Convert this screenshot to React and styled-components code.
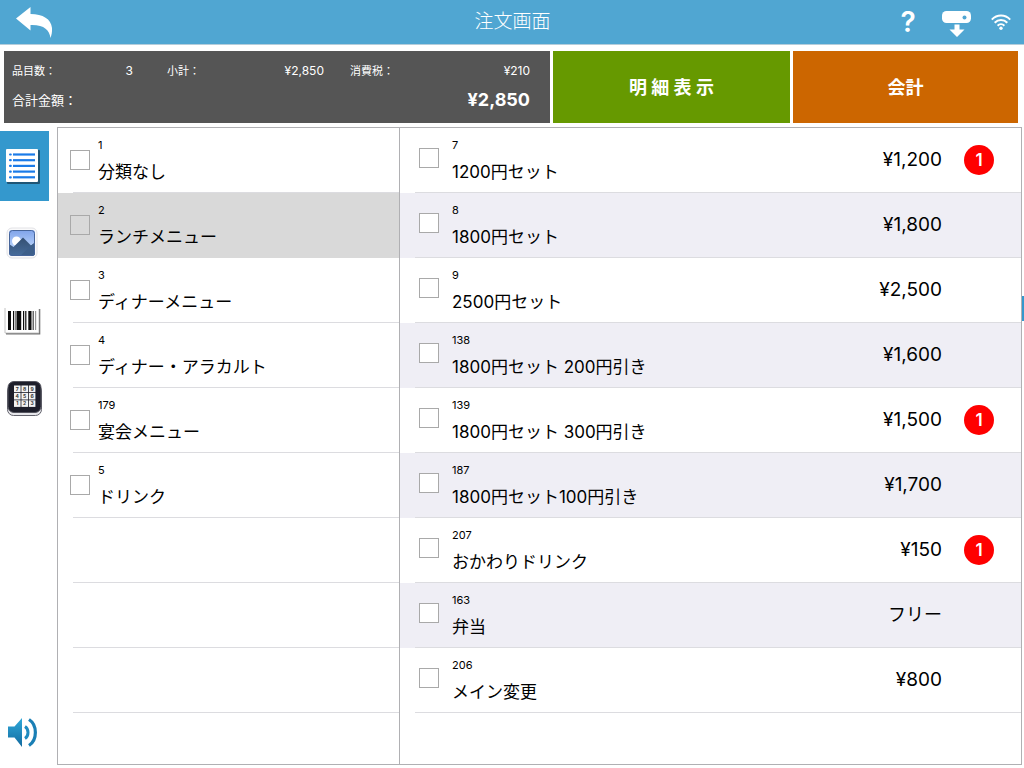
import React, { useState } from "react";
import styled, { createGlobalStyle } from "styled-components";

const COLORS = {
  header: "#50a6d2",
  active: "#3498cd",
  summary: "#555555",
  detail: "#669900",
  checkout: "#cc6600",
  frame: "#b0b0b3",
  line: "#dcdce0",
  stripe: "#efeef5",
  selected: "#d9d9d9",
  badge: "#ff0000",
};

const categories = [
  { id: 1, name: "分類なし" },
  { id: 2, name: "ランチメニュー" },
  { id: 3, name: "ディナーメニュー" },
  { id: 4, name: "ディナー・アラカルト" },
  { id: 179, name: "宴会メニュー" },
  { id: 5, name: "ドリンク" },
];

const products = [
  { id: 7, name: "1200円セット", price: "¥1,200", count: 1 },
  { id: 8, name: "1800円セット", price: "¥1,800" },
  { id: 9, name: "2500円セット", price: "¥2,500" },
  { id: 138, name: "1800円セット 200円引き", price: "¥1,600" },
  { id: 139, name: "1800円セット 300円引き", price: "¥1,500", count: 1 },
  { id: 187, name: "1800円セット100円引き", price: "¥1,700" },
  { id: 207, name: "おかわりドリンク", price: "¥150", count: 1 },
  { id: 163, name: "弁当", price: "フリー", free: true },
  { id: 206, name: "メイン変更", price: "¥800" },
];

const BackIcon = () => (
  <svg width="40" height="36" viewBox="0 0 40 36" fill="#fff">
    <path d="M2 14.500 16.500 3V10C29 10 37 15 38 24C38.300 28 37.500 31 36.500 34C35.500 26 30 20.500 16.500 21V26.500Z" />
  </svg>
);

const PrinterIcon = () => (
  <svg width="30" height="32" viewBox="0 0 30 32">
    <rect x="1" y="5" width="29" height="12" rx="4.500" fill="#fff" />
    <circle cx="23.500" cy="11.500" r="2" fill={COLORS.header} />
    <path d="M13.500 18.500H18.500V23.500H23.500L16 31L8.500 23.500H13.500Z" fill="#fff" />
  </svg>
);

const WifiIcon = () => (
  <svg width="20" height="16" viewBox="0 0 20 16" fill="none" stroke="#fff" strokeWidth="2">
    <path d="M0.800 5.600C6 0.200 14 0.200 19.200 5.600" />
    <path d="M3.700 8.700C7.300 5.100 12.700 5.100 16.300 8.700" />
    <path d="M6.600 11.700C8.500 9.800 11.500 9.800 13.400 11.700" />
    <circle cx="10" cy="14.200" r="1.700" fill="#fff" stroke="none" />
  </svg>
);

const ListIcon = () => (
  <svg width="49" height="40" viewBox="0 0 49 40">
    <rect x="7" y="4" width="33" height="34" rx="1" fill="#1e5575" />
    <rect x="6" y="3" width="32" height="33" rx="1" fill="#fff" />
    {[0, 1, 2, 3, 4].map((i) => (
      <g key={i} fill="#1b7be8">
        <rect x="9" y={7.4 + i * 5.7} width="2.800" height="2.200" rx="1" />
        <rect x="13" y={7.4 + i * 5.7} width="22" height="2.200" />
      </g>
    ))}
  </svg>
);

const PictureIcon = () => (
  <svg width="49" height="40" viewBox="0 0 49 40">
    <defs>
      <linearGradient id="sky" x1="0" y1="0" x2="0" y2="1">
        <stop offset="0" stopColor="#7fa3ea" />
        <stop offset="0.700" stopColor="#b9d3fb" />
      </linearGradient>
      <linearGradient id="hill" x1="0" y1="0" x2="0" y2="1">
        <stop offset="0" stopColor="#344f72" />
        <stop offset="1" stopColor="#476d9c" />
      </linearGradient>
      <clipPath id="frame">
        <rect x="9" y="7" width="26" height="26" rx="3" />
      </clipPath>
    </defs>
    <rect x="7" y="5" width="30" height="30" rx="5" fill="#fafafb" stroke="#e2e2e6" />
    <g clipPath="url(#frame)">
      <rect x="9" y="7" width="26" height="26" fill="url(#sky)" />
      <circle cx="16.500" cy="18" r="4.500" fill="#fff" />
      <path d="M9 21L13.500 24L23 14.500L31 22.500L35 19.500V33H9Z" fill="url(#hill)" />
      <path d="M31 22.500L35 19.500V33H20Z" fill="#3d5f8a" />
      <rect x="9.500" y="7.500" width="25" height="25" rx="3" fill="none" stroke="#47659a" />
    </g>
  </svg>
);

/* x and width of each bar */
const BARS = [
  [8, 3],
  [13, 1.2],
  [15.5, 1],
  [17, 4.2],
  [23, 1.2],
  [25.2, 1.2],
  [28.3, 3.2],
];

const BarcodeIcon = () => (
  <svg width="49" height="40" viewBox="0 0 49 40">
    <path d="M5 8V33H39V9" fill="none" stroke="#c4c4c4" />
    <path d="M6 33.800H39.700V9" fill="none" stroke="#737373" strokeWidth="1.200" />
    {BARS.map(([x, w]) => (
      <rect key={x} x={x} y="11" width={w} height="19" fill="#0c0c0c" />
    ))}
    <rect x="32.500" y="11" width="1.500" height="19" fill="#6a6a6a" />
    <rect x="35" y="11" width="1.200" height="19" fill="#999" />
  </svg>
);

const KeypadIcon = () => (
  <svg width="49" height="40" viewBox="0 0 49 40">
    <rect x="7.500" y="8" width="34" height="30.500" rx="6" fill="#e6e6ea" stroke="#62626c" />
    <rect x="8" y="4.500" width="33" height="31" rx="6" fill="#1d1e2a" stroke="#55555f" />
    {["7", "8", "9", "4", "5", "6", "1", "2", "3"].map((n, i) => {
      const x = 14 + (i % 3) * 7.4;
      const y = 8.5 + Math.floor(i / 3) * 7.4;
      return (
        <g key={n}>
          <rect x={x} y={y} width="6.600" height="6.600" fill="#f3f3f3" />
          <text x={x + 3.3} y={y + 5} fontSize="5" fontWeight="700" textAnchor="middle" fill="#333">
            {n}
          </text>
        </g>
      );
    })}
  </svg>
);

const SpeakerIcon = () => (
  <svg width="32" height="32" viewBox="0 0 32 32">
    <defs>
      <linearGradient id="sound" x1="0" y1="0" x2="0" y2="1">
        <stop offset="0" stopColor="#2fa9da" />
        <stop offset="1" stopColor="#136a9f" />
      </linearGradient>
    </defs>
    <path d="M1 10.500H7.500L15 2V31L7.500 21.500H1Z" fill="url(#sound)" />
    <path d="M18 10.500C22 13 22 20 18 22.500" fill="none" stroke="#1f8bc0" strokeWidth="3" />
    <path d="M22 3.500C30.500 9 30.500 24 22 29.500" fill="none" stroke="#1a7fb5" strokeWidth="3.200" />
  </svg>
);

const sideItems = [
  { label: "一覧", Icon: ListIcon },
  { label: "画像", Icon: PictureIcon },
  { label: "バーコード", Icon: BarcodeIcon },
  { label: "番号入力", Icon: KeypadIcon },
];

const App = () => {
  const [mode, setMode] = useState("一覧");

  return (
    <>
      <GlobalStyle />
      <Page>
        <Header>
          <IconButton aria-label="戻る">
            <BackIcon />
          </IconButton>
          <Title>注文画面</Title>
          <HeaderActions>
            <HelpButton>?</HelpButton>
            <IconButton aria-label="プリンター">
              <PrinterIcon />
            </IconButton>
            <WifiIcon />
          </HeaderActions>
        </Header>

        <TopBar>
          <Summary>
            <SummaryRow>
              <SummaryItem $space={34}>
                <span>品目数：</span>
                <Amount>3</Amount>
              </SummaryItem>
              <SummaryItem $space={26}>
                <span>小計：</span>
                <Amount>¥2,850</Amount>
              </SummaryItem>
              <SummaryItem $space={0}>
                <span>消費税：</span>
                <Amount>¥210</Amount>
              </SummaryItem>
            </SummaryRow>
            <TotalRow>
              <span>合計金額：</span>
              <Total>¥2,850</Total>
            </TotalRow>
          </Summary>
          <BigButton $color={COLORS.detail}>明 細 表 示</BigButton>
          <BigButton $color={COLORS.checkout}>会計</BigButton>
        </TopBar>

        <Main>
          <Sidebar>
            {sideItems.map(({ label, Icon }) => (
              <SideButton
                key={label}
                aria-label={label}
                $active={mode === label}
                onClick={() => setMode(label)}
              >
                <Icon />
              </SideButton>
            ))}
            <SoundButton aria-label="音声">
              <SpeakerIcon />
            </SoundButton>
          </Sidebar>

          <Panel>
            <CategoryList>
              {categories.map((item) => (
                <Row key={item.id} $selected={item.id === 2}>
                  <CategoryLabel>
                    <CheckBox type="checkbox" />
                    <ItemText>
                      <Code>{item.id}</Code>
                      <Name>{item.name}</Name>
                    </ItemText>
                  </CategoryLabel>
                </Row>
              ))}
              <Row />
              <Row />
              <Row />
            </CategoryList>
            <ul>
              {products.map((item, i) => (
                <Row key={item.id} $striped={i % 2 === 1}>
                  <ProductLabel>
                    <CheckBox type="checkbox" />
                    <ItemText>
                      <Code>{item.id}</Code>
                      <Name>{item.name}</Name>
                    </ItemText>
                  </ProductLabel>
                  <Price $free={item.free}>{item.price}</Price>
                  <BadgeSlot>{item.count && <Badge>{item.count}</Badge>}</BadgeSlot>
                </Row>
              ))}
            </ul>
          </Panel>
          <DrawerTab aria-label="メニューを開く" />
        </Main>
      </Page>
    </>
  );
};

export default App;

const GlobalStyle = createGlobalStyle`
  * {
    box-sizing: border-box;
  }
  body {
    margin: 0;
    background: #fff;
    color: #000;
    font-family: Inter, "Noto Sans CJK JP", sans-serif;
  }
  button {
    border: 0;
    padding: 0;
    background: none;
    color: inherit;
    font-family: inherit;
    cursor: pointer;
  }
  ul {
    list-style: none;
    margin: 0;
    padding: 0;
  }
  svg {
    display: block;
  }
`;

const Page = styled.div`
  display: flex;
  flex-direction: column;
  min-height: 100vh;
`;

const Header = styled.header`
  display: grid;
  grid-template-columns: 1fr auto 1fr;
  align-items: center;
  height: 44px;
  padding: 0 13px 0 14px;
  background: ${COLORS.header};
  box-shadow: 0 1px 0 #b4cddb;
  color: #fff;
`;

const Title = styled.h1`
  margin: 0;
  font-size: 19px;
  font-weight: 300;
  line-height: 28px;
`;

const HeaderActions = styled.div`
  display: flex;
  align-items: center;
  justify-content: flex-end;
  gap: 20px;
`;

const IconButton = styled.button`
  justify-self: start;
`;

const HelpButton = styled.button`
  width: 26px;
  font-size: 28px;
  font-weight: 600;
  line-height: 32px;
`;

const TopBar = styled.section`
  display: grid;
  grid-template-columns: 546fr 237fr 225fr;
  gap: 3px;
  height: 72px;
  margin: 7px 6px 4px 4px;
`;

const Summary = styled.div`
  padding: 10px 20px 0 8px;
  background: ${COLORS.summary};
  color: #fff;
`;

const SummaryRow = styled.div`
  display: grid;
  grid-template-columns: 155fr 183fr 180fr;
  font-size: 11px;
  line-height: 20px;
`;

const SummaryItem = styled.div`
  display: flex;
  justify-content: space-between;
  padding-right: ${(props) => props.$space}px;
`;

const Amount = styled.span`
  font-size: 12px;
`;

const TotalRow = styled.div`
  display: flex;
  justify-content: space-between;
  align-items: center;
  margin-top: 5px;
  font-size: 13px;
  line-height: 28px;
`;

const Total = styled.strong`
  font-size: 18px;
  font-weight: 700;
`;

const BigButton = styled.button`
  padding-bottom: 2px;
  background: ${(props) => props.$color};
  color: #fff;
  font-size: 18px;
  font-weight: 700;
`;

const Main = styled.main`
  position: relative;
  display: flex;
  flex: 1;
  padding: 0 2px 3px 0;
`;

const Sidebar = styled.nav`
  display: flex;
  flex-direction: column;
  gap: 7px;
  width: 49px;
  margin-right: 8px;
  padding-top: 4px;
`;

const SideButton = styled.button`
  display: flex;
  align-items: center;
  height: 70px;
  background: ${(props) => (props.$active ? COLORS.active : "transparent")};
`;

const SoundButton = styled.button`
  margin: auto 0 17px 7px;
`;

const Panel = styled.div`
  display: grid;
  grid-template-columns: 342fr 621fr;
  flex: 1;
  border: 1px solid ${COLORS.frame};
`;

const CategoryList = styled.ul`
  border-right: 1px solid ${COLORS.frame};
`;

const rowColor = ({ $selected, $striped }) => {
  if ($selected) return COLORS.selected;
  return $striped ? COLORS.stripe : "#fff";
};

/* the rule under each row starts 15px in from the edge */
const Row = styled.li`
  display: flex;
  align-items: center;
  height: 65px;
  padding-bottom: 1px;
  background: linear-gradient(
      ${(props) => (props.$selected ? COLORS.selected : COLORS.line)} 0 100%
    )
    15px 100% / 100% 1px no-repeat ${rowColor};
`;

const RowLabel = styled.label`
  display: flex;
  flex: 1;
  align-items: flex-start;
  height: 100%;
`;

const CheckBox = styled.input`
  appearance: none;
  flex: none;
  width: 20px;
  height: 20px;
  margin: 0;
  border: 1px solid #a9a9a9;

  &:checked {
    background: ${COLORS.active};
  }
`;

const CategoryLabel = styled(RowLabel)`
  gap: 8px;
  padding-left: 12px;

  ${CheckBox} {
    margin-top: 22px;
  }
`;

const ProductLabel = styled(RowLabel)`
  gap: 13px;
  padding-left: 19px;

  ${CheckBox}:not(:checked) {
    background: #fff;
  }

  ${CheckBox} {
    margin-top: 20px;
  }
`;

const ItemText = styled.span`
  display: flex;
  flex-direction: column;
  gap: 7px;
  padding-top: 9px;
`;

const Code = styled.span`
  font-size: 11px;
  line-height: 16px;
`;

const Name = styled.span`
  font-size: 17px;
  line-height: 24px;
`;

const Price = styled.span`
  font-size: ${(props) => (props.$free ? 18 : 19)}px;
  line-height: 28px;
`;

const BadgeSlot = styled.span`
  width: 30px;
  margin: 0 27px 0 22px;
`;

const Badge = styled.span`
  display: flex;
  align-items: center;
  justify-content: center;
  height: 30px;
  border-radius: 50%;
  background: ${COLORS.badge};
  color: #fff;
  font-size: 17px;
  font-weight: 600;
`;

const DrawerTab = styled.button`
  position: absolute;
  top: 169px;
  right: 0;
  width: 2px;
  height: 25px;
  background: ${COLORS.active};
`;
